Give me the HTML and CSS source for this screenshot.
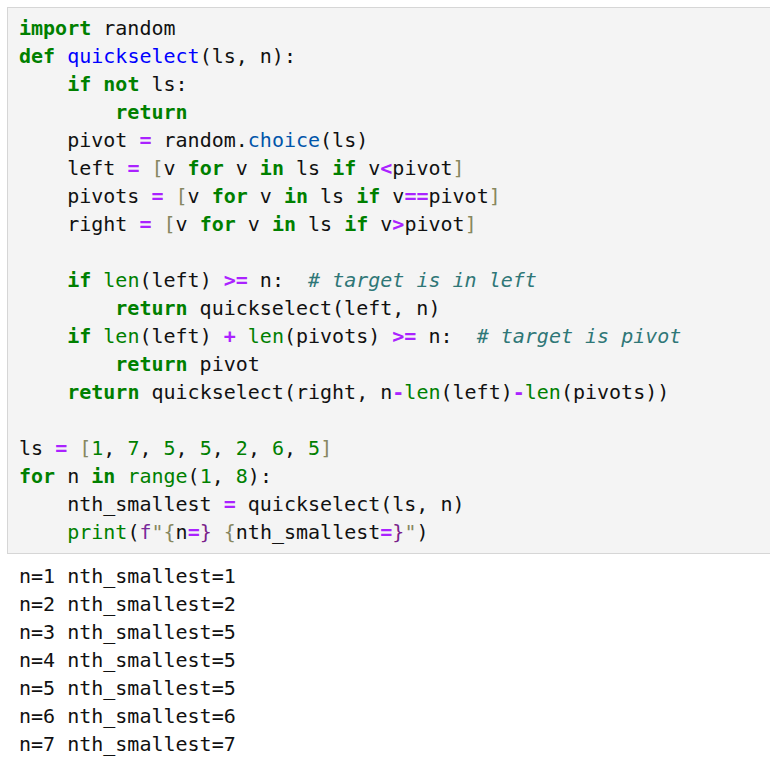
FILE: index.html
```html
<!DOCTYPE html>
<html>
<head>
<meta charset="utf-8">
<link rel="stylesheet" href="styles.css">
</head>
<body>
<div class="cell">
<pre class="code"><span class="k">import</span> random
<span class="k">def</span> <span class="nf">quickselect</span>(ls, n):
    <span class="k">if</span> <span class="k">not</span> ls:
        <span class="k">return</span>
    pivot <span class="o">=</span> random.<span class="nx">choice</span>(ls)
    left <span class="o">=</span> <span class="b">[</span>v <span class="k">for</span> v <span class="k">in</span> ls <span class="k">if</span> v<span class="o">&lt;</span>pivot<span class="b">]</span>
    pivots <span class="o">=</span> <span class="b">[</span>v <span class="k">for</span> v <span class="k">in</span> ls <span class="k">if</span> v<span class="o">==</span>pivot<span class="b">]</span>
    right <span class="o">=</span> <span class="b">[</span>v <span class="k">for</span> v <span class="k">in</span> ls <span class="k">if</span> v<span class="o">&gt;</span>pivot<span class="b">]</span>

    <span class="k">if</span> <span class="nb">len</span>(left) <span class="o">&gt;=</span> n:  <span class="c">#&nbsp;target is in left</span>
        <span class="k">return</span> quickselect(left, n)
    <span class="k">if</span> <span class="nb">len</span>(left) <span class="o">+</span> <span class="nb">len</span>(pivots) <span class="o">&gt;=</span> n:  <span class="c">#&nbsp;target is pivot</span>
        <span class="k">return</span> pivot
    <span class="k">return</span> quickselect(right, n<span class="o">-</span><span class="nb">len</span>(left)<span class="o">-</span><span class="nb">len</span>(pivots))

ls <span class="o">=</span> <span class="b">[</span><span class="m">1</span>, <span class="m">7</span>, <span class="m">5</span>, <span class="m">5</span>, <span class="m">2</span>, <span class="m">6</span>, <span class="m">5</span><span class="b">]</span>
<span class="k">for</span> n <span class="k">in</span> <span class="nb">range</span>(<span class="m">1</span>, <span class="m">8</span>):
    nth_smallest <span class="o">=</span> quickselect(ls, n)
    <span class="nb">print</span>(<span class="sf">f</span><span class="b">"{</span>n<span class="o">=</span><span class="si">}</span> <span class="b">{</span>nth_smallest<span class="o">=</span><span class="si">}</span><span class="b">"</span>)</pre>
</div>
<pre class="output">n=1 nth_smallest=1
n=2 nth_smallest=2
n=3 nth_smallest=5
n=4 nth_smallest=5
n=5 nth_smallest=5
n=6 nth_smallest=6
n=7 nth_smallest=7</pre>
</body>
</html>
```
FILE: styles.css
```css
html, body {
  margin: 0;
  padding: 0;
  background: #ffffff;
  overflow: hidden;
}
body {
  padding: 7px 0 0 7px;
}
.cell {
  background: #f4f4f4;
  border: 1px solid #d6d6d6;
  border-right: none;
  padding: 6px 0 7px 11px;
}
.code, .output {
  margin: 0;
  font-family: "DejaVu Sans Mono", monospace;
  font-size: 20px;
  line-height: 28px;
  color: #111111;
}
.output {
  padding: 8px 0 0 12px;
}
.k { color: #008000; font-weight: bold; }
.nf { color: #0000ff; }
.nx { color: #0055aa; }
.nb { color: #008000; }
.m { color: #008000; }
.o { color: #aa22ff; font-weight: bold; }
.b { color: #878760; }
.c { color: #2f7777; font-style: italic; }
.sf { color: #7a2b9a; }
.si { color: #7a1f8a; }
```
